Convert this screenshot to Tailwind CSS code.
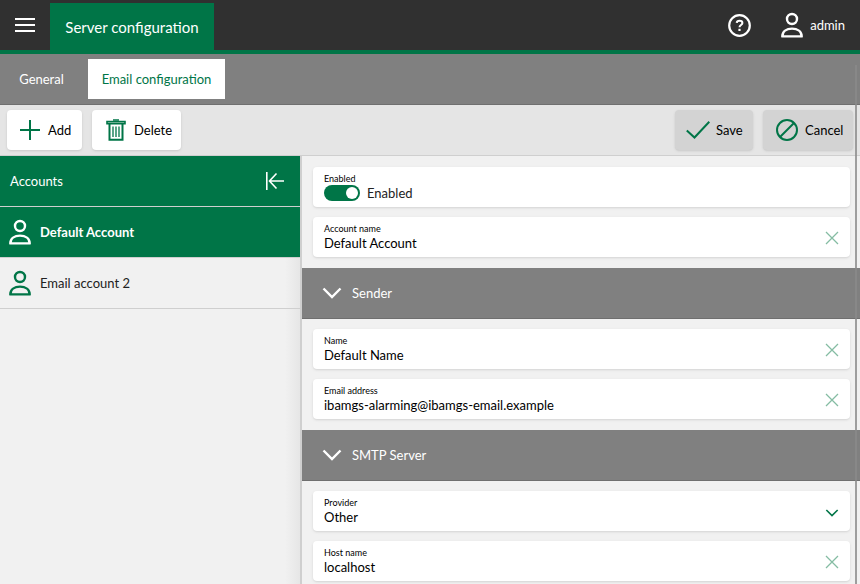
<!DOCTYPE html>
<html lang="en">
  <head>
    <title>Server configuration</title>
    <meta charset="UTF-8" />
    <meta name="viewport" content="width=device-width, initial-scale=1.0" />
    <script src="https://cdn.jsdelivr.net/npm/@tailwindcss/browser@4"></script>
  </head>

  <body class="relative flex h-screen flex-col overflow-hidden bg-[#f1f1f1] font-['Lato','Liberation_Sans',sans-serif] text-[13px] leading-4 text-black">
    <!-- icons -->
    <svg class="hidden">
      <symbol id="icon-user" viewBox="0 0 22 26">
        <g fill="none" stroke="currentColor" stroke-width="2.4" stroke-linejoin="round">
          <circle cx="11" cy="7" r="5" />
          <path d="M1.3 24.4C1.3 19.4 5.6 16.600 11 16.600s9.700 2.800 9.700 7.800z" />
        </g>
      </symbol>
      <symbol id="icon-clear" viewBox="0 0 14 14">
        <path d="M1 1l12 12M13 1L1 13" fill="none" stroke="currentColor" stroke-width="1.300" />
      </symbol>
      <symbol id="icon-chevron" viewBox="0 0 20 12">
        <path d="M1.500 1.500L10 10l8.500-8.500" fill="none" stroke="currentColor" stroke-width="2.400" />
      </symbol>
    </svg>

    <!-- top bar -->
    <header class="flex h-[54px] shrink-0 items-end border-b-4 border-[#007547] bg-[#303030] text-white">
      <button type="button" aria-label="Menu" class="flex h-full w-[50px] shrink-0 items-center justify-center">
        <svg class="h-4 w-5" viewBox="0 0 20 16" stroke="currentColor" stroke-width="2.200">
          <path d="M0 2h20M0 8h20M0 14h20" />
        </svg>
      </button>
      <a href="#" class="flex h-[47px] w-[164px] items-center justify-center bg-[#007547] text-[15px] whitespace-nowrap">Server configuration</a>
      <div class="ml-auto flex h-full items-center gap-[30px] pr-[15px]">
        <button type="button" aria-label="Help">
          <svg class="block size-[23px]" viewBox="0 0 23 23" fill="none" stroke="currentColor">
            <circle cx="11.500" cy="11.500" r="10.300" stroke-width="2.200" />
            <path d="M8.700 8.900c.2-3 5.700-3 5.700 0 0 2.100-2.900 2-2.900 4.300" stroke-width="2" />
            <path d="M11.500 14.800v2.200" stroke-width="2.200" />
          </svg>
        </button>
        <button type="button" class="flex items-center gap-[7px]">
          <svg class="h-[26px] w-[22px]"><use href="#icon-user" /></svg>
          admin
        </button>
      </div>
    </header>

    <!-- tabs -->
    <nav class="flex h-[51px] shrink-0 items-center gap-[10px] border-b border-[#6f6f6f] bg-[#808080] pl-[5px]">
      <a href="#" class="flex h-10 w-[73px] items-center justify-center text-white">General</a>
      <a href="#" class="flex h-10 w-[137px] items-center justify-center bg-white whitespace-nowrap text-[#007547]">Email configuration</a>
    </nav>

    <!-- toolbar -->
    <div class="flex h-[51px] shrink-0 items-center gap-[10px] border-b border-[#cfcfcf] bg-[#e5e5e5] px-[7px]">
      <button type="button" class="flex h-10 w-[75px] items-center gap-2 rounded bg-white pl-[13px] shadow">
        <svg class="size-5" viewBox="0 0 20 20" stroke="#007547" stroke-width="2"><path d="M10 0v20M0 10h20" /></svg>
        Add
      </button>
      <button type="button" class="flex h-10 w-[89px] items-center gap-2 rounded bg-white pl-[14px] shadow">
        <svg class="h-[22px] w-5" viewBox="0 0 20 22" fill="none" stroke="#007547">
          <path d="M7 1h6" stroke-width="1.500" />
          <path d="M1 2.500h18v2.200H1z" fill="#8fc2aa" stroke-width="1.600" />
          <path d="M3.500 5v15.800h13V5" stroke-width="2" />
          <path d="M7 7.500v10.500M10 7.500v10.500M13 7.500v10.500" stroke-width="1.300" />
        </svg>
        Delete
      </button>
      <button type="button" class="ml-auto flex h-10 w-[78px] items-center gap-[6px] rounded bg-[#d3d3d3] pl-[11px] shadow-sm">
        <svg class="h-[18px] w-6" viewBox="0 0 24 18" fill="none" stroke="#007547" stroke-width="2"><path d="M.8 9.500L8.500 16.500 23.300.8" /></svg>
        Save
      </button>
      <button type="button" class="flex h-10 w-[90px] items-center gap-[7px] rounded bg-[#d3d3d3] pl-[13px] shadow-sm">
        <svg class="size-[22px]" viewBox="0 0 22 22" fill="none" stroke="#007547" stroke-width="2">
          <circle cx="11" cy="11" r="10" />
          <path d="M4 18L18 4" />
        </svg>
        Cancel
      </button>
    </div>

    <div class="flex min-h-0 flex-1">
      <!-- account list -->
      <aside class="w-[302px] shrink-0 border-r-2 border-[#cfcfcf] bg-[linear-gradient(to_right,transparent_285px,#e6e6e6)]">
        <div class="flex h-[51px] items-center justify-between border-b border-[#cfcfcf] bg-[#007547] pr-4 pl-[10px] text-white">
          <h2>Accounts</h2>
          <button type="button" aria-label="Collapse">
            <svg class="block h-[18px] w-[18px]" viewBox="0 0 18 18" fill="none" stroke="currentColor" stroke-width="1.600">
              <path d="M.8 0v18M3.500 9H18M10.500 1.500L3.500 9l7 7.500" />
            </svg>
          </button>
        </div>
        <ul>
          <li class="border-b border-[#cfcfcf] bg-[#007547] text-white">
            <button type="button" class="flex h-[50px] w-full items-center gap-[9px] pl-[9px] font-bold">
              <svg class="h-[26px] w-[22px]"><use href="#icon-user" /></svg>
              Default Account
            </button>
          </li>
          <li class="border-b border-[#cfcfcf]">
            <button type="button" class="flex h-[50px] w-full items-center gap-[9px] pl-[9px] text-[#222]">
              <svg class="h-[26px] w-[22px] text-[#007547]"><use href="#icon-user" /></svg>
              Email account 2
            </button>
          </li>
        </ul>
      </aside>

      <!-- account settings -->
      <form class="min-w-0 flex-1 overflow-y-auto pt-px [scrollbar-width:none]">
        <div class="flex flex-col gap-[10px] pt-[10px] pr-[10px] pb-[11px] pl-[11px]">
          <div class="flex h-10 flex-col rounded bg-white px-[11px] pt-[6px] shadow">
            <label for="enabled" class="text-[9px] leading-3">Enabled</label>
            <div class="flex items-center gap-[7px]">
              <input
                type="checkbox"
                id="enabled"
                checked
                class="h-4 w-9 appearance-none rounded-full bg-[#999] p-[2px] before:block before:size-3 before:rounded-full before:bg-white checked:bg-[#007547] checked:before:ml-auto"
              />
              <span class="text-[#222]">Enabled</span>
            </div>
          </div>
          <div class="relative flex h-10 flex-col rounded bg-white px-[11px] pt-[6px] shadow">
            <label for="account-name" class="text-[9px] leading-3">Account name</label>
            <input type="text" id="account-name" value="Default Account" class="h-4 w-full pr-8 outline-none" />
            <button type="button" aria-label="Clear" class="absolute top-[14px] right-[11px] text-[#85bca3]">
              <svg class="block size-[14px]"><use href="#icon-clear" /></svg>
            </button>
          </div>
        </div>

        <button type="button" class="flex h-[51px] w-full items-center gap-[10px] border-b border-[#6f6f6f] bg-[#808080] pl-5 text-white">
          <svg class="h-3 w-5"><use href="#icon-chevron" /></svg>
          Sender
        </button>
        <div class="flex flex-col gap-[10px] pt-[10px] pr-[10px] pb-[11px] pl-[11px]">
          <div class="relative flex h-10 flex-col rounded bg-white px-[11px] pt-[6px] shadow">
            <label for="name" class="text-[9px] leading-3">Name</label>
            <input type="text" id="name" value="Default Name" class="h-4 w-full pr-8 outline-none" />
            <button type="button" aria-label="Clear" class="absolute top-[14px] right-[11px] text-[#85bca3]">
              <svg class="block size-[14px]"><use href="#icon-clear" /></svg>
            </button>
          </div>
          <div class="relative flex h-10 flex-col rounded bg-white px-[11px] pt-[6px] shadow">
            <label for="email" class="text-[9px] leading-3">Email address</label>
            <input type="email" id="email" value="ibamgs-alarming@ibamgs-email.example" class="h-4 w-full pr-8 outline-none" />
            <button type="button" aria-label="Clear" class="absolute top-[14px] right-[11px] text-[#85bca3]">
              <svg class="block size-[14px]"><use href="#icon-clear" /></svg>
            </button>
          </div>
        </div>

        <button type="button" class="flex h-[51px] w-full items-center gap-[10px] border-b border-[#6f6f6f] bg-[#808080] pl-5 text-white">
          <svg class="h-3 w-5"><use href="#icon-chevron" /></svg>
          SMTP Server
        </button>
        <div class="flex flex-col gap-[10px] pt-[10px] pr-[10px] pb-[11px] pl-[11px]">
          <div class="relative flex h-10 flex-col rounded bg-white px-[11px] pt-[6px] shadow">
            <label for="provider" class="text-[9px] leading-3">Provider</label>
            <select id="provider" class="h-4 w-full appearance-none pr-8 outline-none">
              <option>Other</option>
            </select>
            <svg class="pointer-events-none absolute top-[18px] right-[11px] h-2 w-[14px] text-[#007547]"><use href="#icon-chevron" /></svg>
          </div>
          <div class="relative flex h-10 flex-col rounded bg-white px-[11px] pt-[6px] shadow">
            <label for="host" class="text-[9px] leading-3">Host name</label>
            <input type="text" id="host" value="localhost" class="h-4 w-full pr-8 outline-none" />
            <button type="button" aria-label="Clear" class="absolute top-[14px] right-[11px] text-[#85bca3]">
              <svg class="block size-[14px]"><use href="#icon-clear" /></svg>
            </button>
          </div>
        </div>
      </form>
    </div>

    <!-- scroll indicator over the page -->
    <div class="pointer-events-none absolute top-[65px] right-[3px] bottom-0 w-[2px] bg-[#8a8a8a]/80"></div>
  </body>
</html>
